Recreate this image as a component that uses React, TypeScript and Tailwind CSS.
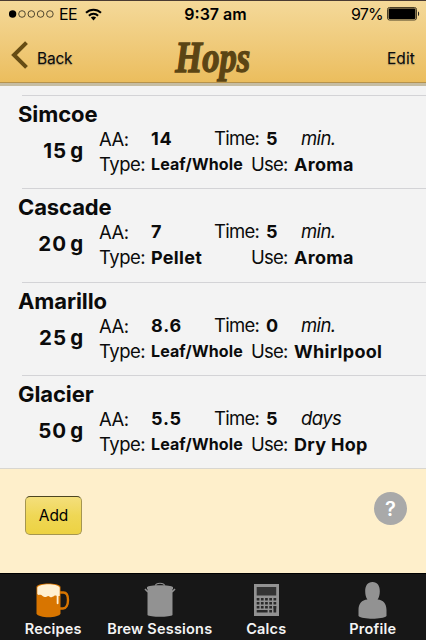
import React from 'react';

interface Hop {
  name: string;
  weight: string;
  alpha: string;
  type: string;
  time: string;
  unit: string;
  use: string;
}

const hops: Hop[] = [
  { name: 'Simcoe', weight: '15 g', alpha: '14', type: 'Leaf/Whole', time: '5', unit: 'min.', use: 'Aroma' },
  { name: 'Cascade', weight: '20 g', alpha: '7', type: 'Pellet', time: '5', unit: 'min.', use: 'Aroma' },
  { name: 'Amarillo', weight: '25 g', alpha: '8.6', type: 'Leaf/Whole', time: '0', unit: 'min.', use: 'Whirlpool' },
  { name: 'Glacier', weight: '50 g', alpha: '5.5', type: 'Leaf/Whole', time: '5', unit: 'days', use: 'Dry Hop' },
];

function StatusBar() {
  return (
    <div className="grid h-[26px] grid-cols-[1fr_auto_1fr] items-center pl-[9px] pr-[6px] text-[16px] leading-none text-black">
      <div className="flex items-center">
        <svg width="46" height="10" viewBox="0 0 46 10">
          <circle cx="3.6" cy="5" r="3.7" fill="#000" />
          {[13, 22.3, 31.6, 40.9].map((cx) => (
            <circle key={cx} cx={cx} cy="5" r="3.3" fill="none" stroke="#2a2417" strokeWidth=".8" />
          ))}
        </svg>
        <span className="ml-[4px] text-[16px] tracking-[-0.6px]">EE</span>
        <svg className="ml-[8px]" width="17" height="13" viewBox="0 0 17 13" fill="none" stroke="#000" strokeWidth="2">
          <path d="M1 4.7C5.2.6 11.8.6 16 4.7" />
          <path d="M3.9 7.7C6.5 5.2 10.5 5.2 13.1 7.7" />
          <path d="M5.9 9.6C7.4 8.2 9.6 8.2 11.1 9.6L8.5 12.4z" fill="#000" stroke="none" />
        </svg>
      </div>
      <span className="translate-x-[1px] text-[16px] font-semibold">9:37 am</span>
      <div className="flex items-center justify-end">
        <span className="text-[16px] tracking-[-0.8px]">97%</span>
        <svg className="ml-[4px]" width="33" height="14" viewBox="0 0 33 14">
          <rect x=".5" y=".5" width="29" height="12.5" rx="2" fill="#d8bd80" stroke="#4b4027" />
          <rect x="1.6" y="1.6" width="26.8" height="10.3" rx="1" fill="#000" />
          <path d="M31 4.5c1.5.5 1.5 4 0 4.500z" fill="#222" />
        </svg>
      </div>
    </div>
  );
}

function Header() {
  return (
    <header className="h-[86px] border-t border-[#4a3b32] border-b-[3px] border-b-[#c6bda3] bg-gradient-to-b from-[#f4d999] to-[#ebbd5c] shadow-[inset_0_-1px_0_#b7934c]">
      <StatusBar />
      <div className="grid h-[56px] grid-cols-[1fr_auto_1fr] items-center pl-[11px] pr-[11px]">
        <div className="flex items-center">
          <svg width="18" height="28" viewBox="0 0 18 28" fill="none" stroke="#664c14" strokeWidth="4">
            <path d="M15.5 1.6L3 14l12.5 12.4" />
          </svg>
          <span className="mt-[7px] ml-[8px] text-[15.5px] tracking-[-0.2px] [text-shadow:0_1px_1px_rgba(80,80,80,.5)]">Back</span>
        </div>
        <h1 className="mt-[4px] scale-x-[.77] font-['Liberation_Serif',serif] text-[45px] leading-none font-bold text-[#5b4514] italic [-webkit-text-stroke:1.4px_#5b4514]">
          Hops
        </h1>
        <span className="mt-[8px] text-right text-[15.5px] tracking-[0.1px] [text-shadow:0_1px_1px_rgba(90,90,90,.5)]">Edit</span>
      </div>
    </header>
  );
}

function HopRow({ hop }: { hop: Hop }) {
  return (
    <li className="h-[93.3px] whitespace-nowrap">
      <div className="ml-[22px] h-px bg-[#d3d3d6]" />
      <h2 className="mt-[4px] ml-[18px] h-[26px] text-[22px] leading-[28px] font-bold tracking-[-0.1px]">{hop.name}</h2>
      <div className="flex text-[18.5px] leading-[25px]">
        <div className="w-[99px] pt-[12px] pr-[15px] text-right text-[20.5px] font-bold tracking-[0.9px] [word-spacing:-2.5px]">{hop.weight}</div>
        <div>
          <div className="grid grid-cols-[52px_63px_52px_35px_80px]">
            <span className="pt-px tracking-[-0.5px]">AA:</span>
            <span className="text-[18px] font-bold tracking-[0.8px]">{hop.alpha}</span>
            <span className="tracking-[-0.7px]">Time:</span>
            <span className="text-[18px] font-bold">{hop.time}</span>
            <span className="tracking-[-0.6px] italic">{hop.unit}</span>
          </div>
          <div className="grid grid-cols-[52px_100px_43px_110px]">
            <span className="tracking-[-0.5px]">Type:</span>
            <span className={hop.type === 'Pellet' ? 'text-[18px] font-bold tracking-[0.3px]' : 'text-[16px] font-bold tracking-[0.1px]'}>
              {hop.type}
            </span>
            <span className="tracking-[-0.8px]">Use:</span>
            <span className="text-[18px] font-bold tracking-[0.3px]">{hop.use}</span>
          </div>
        </div>
      </div>
    </li>
  );
}

function MugIcon() {
  return (
    <svg width="34" height="35" viewBox="0 0 34 35">
      <path d="M24 9.500h3.500c3 0 4.500 2.500 4.500 7.500s-2 8.500-5 8.500h-3" fill="none" stroke="#d87500" strokeWidth="2.4" />
      <path d="M.5 3.800C2-.6 22.500-.6 24.500 3.800v27c-2 4.600-22 4.600-24 0z" fill="#d87500" />
      <path d="M1.300 4.500C4 .2 21 .2 23.700 4.500V13h-1.200v7.500c-.4 1-1.400 1-1.800 0V13c-1.500-1-2.500.2-3.500.5-1.500.5-2 1.500-3.500.2-2-2-3 1-5 .3-2.500-.5-3-3-5-2.200-1 .4-1.700 0-2.400-.8z" fill="#fff0d1" />
    </svg>
  );
}

function PotIcon() {
  return (
    <svg width="32" height="36" viewBox="0 0 32 36" fill="#929292">
      <path d="M11.5 3.500c.5-3 8.500-3 9 0" fill="none" stroke="#929292" strokeWidth="1.2" />
      <path d="M3 5c2-2.500 24-2.500 26 0v2H3zM3.500 6.500h25V33c-2 2.400-23 2.400-25 0z" />
      <path d="M4 10L1 7M28 10l3-3" stroke="#929292" strokeWidth="1.6" />
    </svg>
  );
}

function CalcIcon() {
  return (
    <svg width="25" height="32" viewBox="0 0 25 32">
      <rect width="25" height="32" fill="#929292" />
      <rect x="2.7" y="3" width="19.5" height="8.5" fill="#343434" />
      {[14, 18, 22].map((y) =>
        [2.7, 6.9, 11.1, 15.3, 19.5].map((x) => <rect key={`${x}-${y}`} x={x} y={y} width="2.7" height="2.5" fill="#292929" />),
      )}
      <path d="M2.7 26h10.900v2.500H2.700zM15.300 26H18v2.500h-2.700zM19.500 22h2.700v6.500h-2.700z" fill="#292929" />
    </svg>
  );
}

function ProfileIcon() {
  return (
    <svg width="29" height="37" viewBox="0 0 29 37" fill="#929292">
      <path d="M14.5 0c5 0 7.300 3.800 7.300 9.200 0 3.500-.8 6.300-2.200 8.300 5.600.4 8.900 4 8.900 10.500v6c-4 3.600-24 3.600-28 0v-6c0-6.500 3.300-10.100 8.900-10.500-1.400-2-2.200-4.800-2.200-8.300C7.200 3.800 9.500 0 14.500 0z" />
    </svg>
  );
}

const tabs = [
  { label: 'Recipes', icon: <MugIcon /> },
  { label: 'Brew Sessions', icon: <PotIcon /> },
  { label: 'Calcs', icon: <CalcIcon /> },
  { label: 'Profile', icon: <ProfileIcon /> },
];

export default function App() {
  return (
    <div className="flex h-[640px] w-[426px] flex-col overflow-hidden bg-[#f3f3f3] font-['Inter','Liberation_Sans',sans-serif] text-[#0b0b0b]">
      <Header />
      <ul className="mt-[9px] h-[373px] shrink-0">
        {hops.map((hop) => (
          <HopRow key={hop.name} hop={hop} />
        ))}
      </ul>
      <section className="flex h-[105px] shrink-0 items-start justify-between border-t border-[#d8d6d0] bg-[#feefcb] pt-[24px] pr-[19px] pl-[25px]">
        <button className="mt-[3px] h-[39px] w-[57px] rounded-[5px] border border-[#a59650] border-t-[#4c4520] bg-gradient-to-b from-[#f4df7b] via-[#efd755] to-[#edd242] text-[15.5px] tracking-[-0.1px] text-black">
          Add
        </button>
        <button className="-mt-px h-[33px] w-[33px] rounded-full bg-[#a9a9a9] text-[20px] leading-none font-semibold text-white">?</button>
      </section>
      <nav className="grid h-[67px] shrink-0 grid-cols-4 border-t border-black bg-[#171717] text-[14.5px] font-semibold tracking-[0.2px] text-[#f4f4f4]">
        {tabs.map((tab) => (
          <div key={tab.label} className="flex flex-col items-center">
            <div className="flex h-[45px] items-center pt-[7px]">{tab.icon}</div>
            <span className="leading-[20px] whitespace-nowrap">{tab.label}</span>
          </div>
        ))}
      </nav>
    </div>
  );
}
